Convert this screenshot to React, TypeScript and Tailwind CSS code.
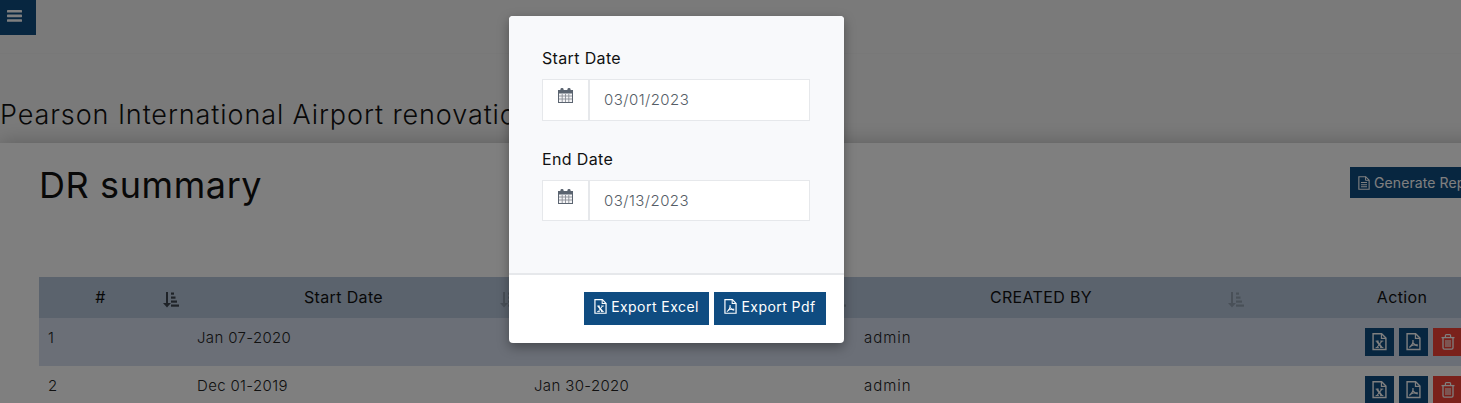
const rows = [
  { id: 1, start: "Jan 07-2020", end: "", by: "admin" },
  { id: 2, start: "Dec 01-2019", end: "Jan 30-2020", by: "admin" },
];

function CalendarIcon() {
  return (
    <svg width="15" height="15" viewBox="0 0 15 15">
      <rect x="0.5" y="2.5" width="14" height="12" fill="#f4f4f6" stroke="#5b6470" />
      <rect x="0.5" y="2" width="14" height="3.5" fill="#5b6470" />
      <rect x="2.5" y="0" width="3" height="4" rx="1.2" fill="#5b6470" />
      <rect x="9.5" y="0" width="3" height="4" rx="1.2" fill="#5b6470" />
      <path d="M1 8h13M1 11h13M4.2 6v8M7.5 6v8M10.8 6v8" stroke="#8b8f96" strokeWidth="0.9" />
    </svg>
  );
}

function BarsIcon() {
  return (
    <svg width="15" height="12" viewBox="0 0 15 12" fill="currentColor">
      <rect width="15" height="2.6" rx="0.6" />
      <rect y="4.6" width="15" height="2.6" rx="0.6" />
      <rect y="9.2" width="15" height="2.6" rx="0.6" />
    </svg>
  );
}

function SortIcon({ className }: { className: string }) {
  return (
    <svg width="17" height="17" viewBox="0 0 17 17" fill="currentColor" className={className}>
      <rect x="4" y="1" width="2" height="12" />
      <path d="M1 12h8l-4 4.5z" />
      <rect x="9" y="1.5" width="3" height="2.2" />
      <rect x="9" y="5.5" width="4.5" height="2.2" />
      <rect x="9" y="9.5" width="6" height="2.2" />
      <rect x="9" y="13.5" width="8" height="2.2" />
    </svg>
  );
}

function FileShell({ size, children }: { size: number; children: React.ReactNode }) {
  return (
    <svg width={size} height={size * 1.15} viewBox="0 0 14 16" fill="none" stroke="currentColor">
      <path d="M1 .7h8l4 4v10.6H1z" strokeWidth="1.3" />
      <path d="M8.8 .7v4.2H13" strokeWidth="1.1" />
      {children}
    </svg>
  );
}

function ExcelIcon({ size }: { size: number }) {
  return (
    <FileShell size={size}>
      <path d="M4.5 7.5l4.6 6" strokeWidth="1.7" />
      <path d="M9.2 7.5l-4.6 6" strokeWidth="1" />
      <path d="M3.4 7.5h3M7.6 7.5h3M3.4 13.5h3M7.6 13.5h3" strokeWidth="0.9" />
    </FileShell>
  );
}

function PdfIcon({ size }: { size: number }) {
  return (
    <FileShell size={size}>
      <path d="M6.5 6.5c.4 2.6-1.2 5.4-3.4 7" strokeWidth="1.2" />
      <path d="M6.6 9c.7 1.6 2 2.6 4.4 2.9" strokeWidth="1.2" />
      <path d="M4.6 11.8c2-.7 4-1 6.4-.9" strokeWidth="1" />
    </FileShell>
  );
}

function TrashIcon() {
  return (
    <svg width="14" height="16" viewBox="0 0 14 16" fill="none" stroke="currentColor">
      <path d="M.5 3.6h13" strokeWidth="1.3" />
      <path d="M4.4 3.4V1.6c0-.5.4-.9.9-.9h3.4c.5 0 .9.4.9.9v1.8" strokeWidth="1.2" />
      <path d="M2 3.6v10.2c0 .8.6 1.4 1.4 1.4h7.2c.8 0 1.4-.6 1.4-1.4V3.6" strokeWidth="1.3" />
      <path d="M5 6v7M7 6v7M9 6v7" strokeWidth="1.1" />
    </svg>
  );
}

function ReportIcon() {
  return (
    <svg width="12" height="14" viewBox="0 0 14 16" fill="none" stroke="currentColor">
      <path d="M1 .7h8l4 4v10.6H1z" strokeWidth="1.3" />
      <path d="M8.8 .7v4.2H13" strokeWidth="1.1" />
      <path d="M3.5 7.5h7M3.5 10h7M3.5 12.5h7" strokeWidth="1.2" />
    </svg>
  );
}

function DateField({ label, value, height }: { label: string; value: string; height: string }) {
  return (
    <div className="mb-[28px]">
      <label className="mb-[10px] block text-[16px] leading-[21px] tracking-[0.35px] text-[#111]">{label}</label>
      <div className={`flex w-[268px] border border-[#e6e8eb] bg-white ${height}`}>
        <span className="flex w-[47px] shrink-0 justify-center border-r-2 border-[#e6e8eb] pt-[8px]">
          <CalendarIcon />
        </span>
        <span className="pl-[14px] text-[15px] leading-[40px] font-light tracking-[0.45px] text-[#555d66]">{value}</span>
      </div>
    </div>
  );
}

function SortHead({ label, iconColor }: { label: string; iconColor: string }) {
  return (
    <th className="relative h-[41px] pr-[26px] pb-[2px] text-center text-[16px] font-normal tracking-[0.35px] text-[#111]">
      {label}
      <SortIcon className={`absolute right-[9px] top-[14px] ${iconColor}`} />
    </th>
  );
}

export default function App() {
  return (
    <div className="relative h-[403px] w-[1461px] overflow-hidden bg-[#f5f5f5] font-['Inter',sans-serif]">
      <div className="h-[54px] border-b border-[#f0f0f0]">
        <button type="button" className="flex h-[35px] w-[36px] items-center bg-[#0f4c81] pb-[3px] pl-[7px] text-white">
          <BarsIcon />
        </button>
      </div>

      <h2 className="mt-[44px] h-[45px] whitespace-nowrap text-[27px] leading-[34px] font-light tracking-[0.9px] text-[#111]">
        Pearson International Airport renovation
      </h2>

      <div className="h-[300px] w-[1600px] bg-white px-[39px] pt-[24px] shadow-[0_0_20px_rgba(0,0,0,0.25)]">
        <div className="flex h-[110px] w-[1512px] items-start justify-between">
          <h1 className="text-[36px] leading-[36px] font-normal tracking-[0.6px] text-[#111]">DR summary</h1>
          <button
            type="button"
            className="mr-[31px] flex h-[31px] w-[170px] items-center gap-[4px] whitespace-nowrap bg-[#0f4c81] pl-[8px] text-[14px] tracking-[0.1px] text-white"
          >
            <ReportIcon /> Generate Report
          </button>
        </div>

        <table className="w-[1512px] table-fixed border-collapse text-[15px] font-light tracking-[0.35px] text-[#222]">
          <colgroup>
            <col className="w-[149px]" />
            <col className="w-[337px]" />
            <col className="w-[330px]" />
            <col className="w-[398px]" />
            <col className="w-[298px]" />
          </colgroup>
          <thead className="bg-[#b6c6da]">
            <tr>
              <SortHead label="#" iconColor="text-[#3f4650]" />
              <SortHead label="Start Date" iconColor="text-[#93a1b0]" />
              <SortHead label="End Date" iconColor="text-[#93a1b0]" />
              <SortHead label="CREATED BY" iconColor="text-[#93a1b0]" />
              <th className="h-[41px] pb-[2px] text-[16px] font-normal tracking-[0.35px] text-[#111]">Action</th>
            </tr>
          </thead>
          <tbody>
            {rows.map((r) => (
              <tr key={r.id} className="h-[48px] odd:bg-[#d6deee] even:bg-white">
                <td className="px-[9px] pb-[8px]">{r.id}</td>
                <td className="px-[9px] pb-[8px]">{r.start}</td>
                <td className="px-[9px] pb-[8px]">{r.end}</td>
                <td className="px-[9px] pb-[8px] tracking-[1px]">{r.by}</td>
                <td className="pl-[112px]">
                  <div className="flex gap-[5px]">
                    <span className="flex h-[28px] w-[29px] items-center justify-center bg-[#0f4c81] text-white">
                      <ExcelIcon size={15} />
                    </span>
                    <span className="flex h-[28px] w-[29px] items-center justify-center bg-[#0f4c81] text-white">
                      <PdfIcon size={15} />
                    </span>
                    <span className="flex h-[28px] w-[29px] items-center justify-center bg-[#f44336] text-white">
                      <TrashIcon />
                    </span>
                  </div>
                </td>
              </tr>
            ))}
          </tbody>
        </table>
      </div>

      {/* modal backdrop */}
      <div className="absolute inset-0 bg-black/50" />

      <div className="absolute left-[509px] top-[16px] w-[335px] overflow-hidden rounded-[4px] bg-white shadow-[0_4px_12px_rgba(0,0,0,0.35)]">
        <div className="h-[259px] border-b-2 border-[#e6e8eb] bg-[#f8f9fb] px-[33px] pt-[32px]">
          <DateField label="Start Date" value="03/01/2023" height="h-[42px]" />
          <DateField label="End Date" value="03/13/2023" height="h-[41px]" />
        </div>
        <div className="flex h-[68px] justify-end gap-[5px] pr-[18px] pt-[17px]">
          <button type="button" className="flex h-[33px] w-[125px] items-center justify-center gap-[4px] bg-[#0f4c81] pb-[4px] text-[14px] tracking-[0.45px] text-white">
            <ExcelIcon size={13} /> Export Excel
          </button>
          <button type="button" className="flex h-[33px] w-[112px] items-center justify-center gap-[4px] bg-[#0f4c81] pb-[4px] text-[14px] tracking-[0.45px] text-white">
            <PdfIcon size={13} /> Export Pdf
          </button>
        </div>
      </div>
    </div>
  );
}
